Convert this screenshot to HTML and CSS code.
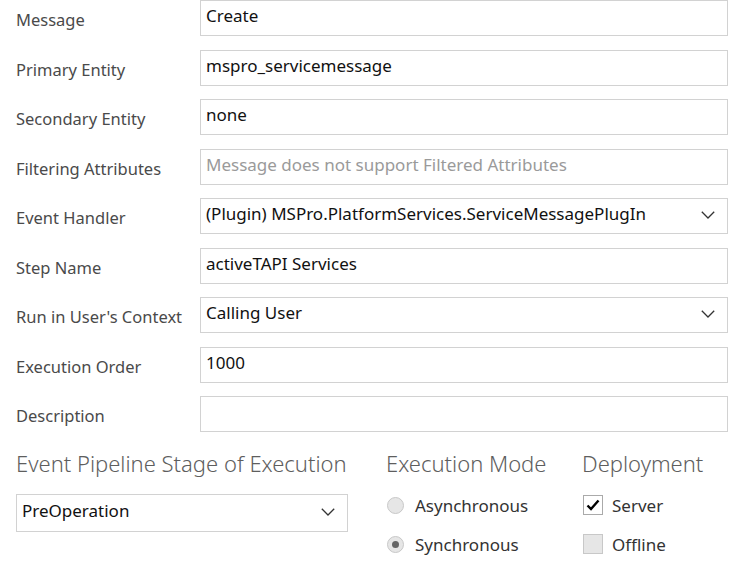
FILE: index.html
```html
<!DOCTYPE html>
<html>
<head>
<meta charset="utf-8">
<link rel="stylesheet" href="styles.css">
</head>
<body>
<div class="form">
  <div class="row"><div class="label">Message</div><div class="field">Create</div></div>
  <div class="row"><div class="label">Primary Entity</div><div class="field">mspro_servicemessage</div></div>
  <div class="row"><div class="label">Secondary Entity</div><div class="field">none</div></div>
  <div class="row"><div class="label">Filtering Attributes</div><div class="field placeholder">Message does not support Filtered Attributes</div></div>
  <div class="row"><div class="label">Event Handler</div><div class="field select"><span>(Plugin) MSPro.PlatformServices.ServiceMessagePlugIn</span><svg class="chev" width="14" height="8" viewBox="0 0 14 8"><polyline points="0.8,0.8 7,7 13.2,0.8" fill="none" stroke="#333" stroke-width="1.3"/></svg></div></div>
  <div class="row"><div class="label">Step Name</div><div class="field">activeTAPI Services</div></div>
  <div class="row"><div class="label">Run in User's Context</div><div class="field select"><span>Calling User</span><svg class="chev" width="14" height="8" viewBox="0 0 14 8"><polyline points="0.8,0.8 7,7 13.2,0.8" fill="none" stroke="#333" stroke-width="1.3"/></svg></div></div>
  <div class="row"><div class="label">Execution Order</div><div class="field">1000</div></div>
  <div class="row"><div class="label">Description</div><div class="field"></div></div>
</div>
<div class="bottom">
  <div class="col col-stage">
    <div class="heading">Event Pipeline Stage of Execution</div>
    <div class="field select stage"><span>PreOperation</span><svg class="chev" width="14" height="8" viewBox="0 0 14 8"><polyline points="0.8,0.8 7,7 13.2,0.8" fill="none" stroke="#333" stroke-width="1.3"/></svg></div>
  </div>
  <div class="col col-mode">
    <div class="heading">Execution Mode</div>
    <div class="opts">
      <div class="opt"><span class="radio"></span><span>Asynchronous</span></div>
      <div class="opt"><span class="radio on"></span><span>Synchronous</span></div>
    </div>
  </div>
  <div class="col col-deploy">
    <div class="heading">Deployment</div>
    <div class="opts">
      <div class="opt"><span class="check on"><svg width="14" height="12" viewBox="0 0 14 12"><polyline points="1.5,6.5 5,10 12.5,1.5" fill="none" stroke="#000" stroke-width="2.4"/></svg></span><span>Server</span></div>
      <div class="opt"><span class="check"></span><span>Offline</span></div>
    </div>
  </div>
</div>
</body>
</html>
```
FILE: styles.css
```css
html, body {
  margin: 0;
  padding: 0;
  background: #fff;
}
body {
  font-family: "Noto Sans", "Open Sans", sans-serif;
  font-size: 17px;
  color: #222;
  width: 742px;
  height: 570px;
  overflow: hidden;
}
.form {
  display: flex;
  flex-direction: column;
  gap: 13.5px;
}
.row {
  display: flex;
  height: 36px;
}
.label {
  width: 184px;
  padding-left: 16px;
  padding-top: 8px;
  line-height: 24px;
  color: #4a4a4a;
  font-size: 16.5px;
}
.field {
  box-sizing: border-box;
  width: 528px;
  height: 36px;
  border: 1px solid #d2d2d2;
  padding: 3px 5px 0;
  line-height: 24px;
  color: #111;
  white-space: nowrap;
  overflow: hidden;
}
.placeholder {
  color: #9a9a9a;
}
.select {
  display: flex;
  justify-content: space-between;
  align-items: flex-start;
}
.chev {
  margin-top: 9px;
  margin-right: 7px;
  flex: none;
}
.bottom {
  display: flex;
  padding-left: 16px;
  margin-top: 16px;
}
.heading {
  font-size: 22px;
  font-weight: 300;
  color: #5e5e5e;
  line-height: 30px;
  white-space: nowrap;
}
.col-stage {
  width: 370px;
}
.col-mode {
  width: 196px;
}
.stage {
  width: 332px;
  height: 38px;
  margin-top: 16px;
  padding-top: 4px;
}
.opts {
  margin-top: 15px;
  display: flex;
  flex-direction: column;
  gap: 15px;
}
.opt {
  display: flex;
  align-items: center;
  height: 24px;
  color: #333;
}
.radio {
  box-sizing: border-box;
  width: 17px;
  height: 17px;
  border-radius: 50%;
  border: 1px solid #c8c8c8;
  background: #e6e6e6;
  margin-left: 1px;
  margin-right: 11px;
  display: flex;
  align-items: center;
  justify-content: center;
}
.radio.on::after {
  content: "";
  width: 7px;
  height: 7px;
  border-radius: 50%;
  background: #666;
}
.check {
  box-sizing: border-box;
  width: 20px;
  height: 20px;
  border: 1px solid #c8c8c8;
  background: #e6e6e6;
  margin-left: 1px;
  margin-right: 9px;
  display: flex;
  align-items: center;
  justify-content: center;
}
.check.on {
  background: #fff;
  border-color: #aaa;
}
```
